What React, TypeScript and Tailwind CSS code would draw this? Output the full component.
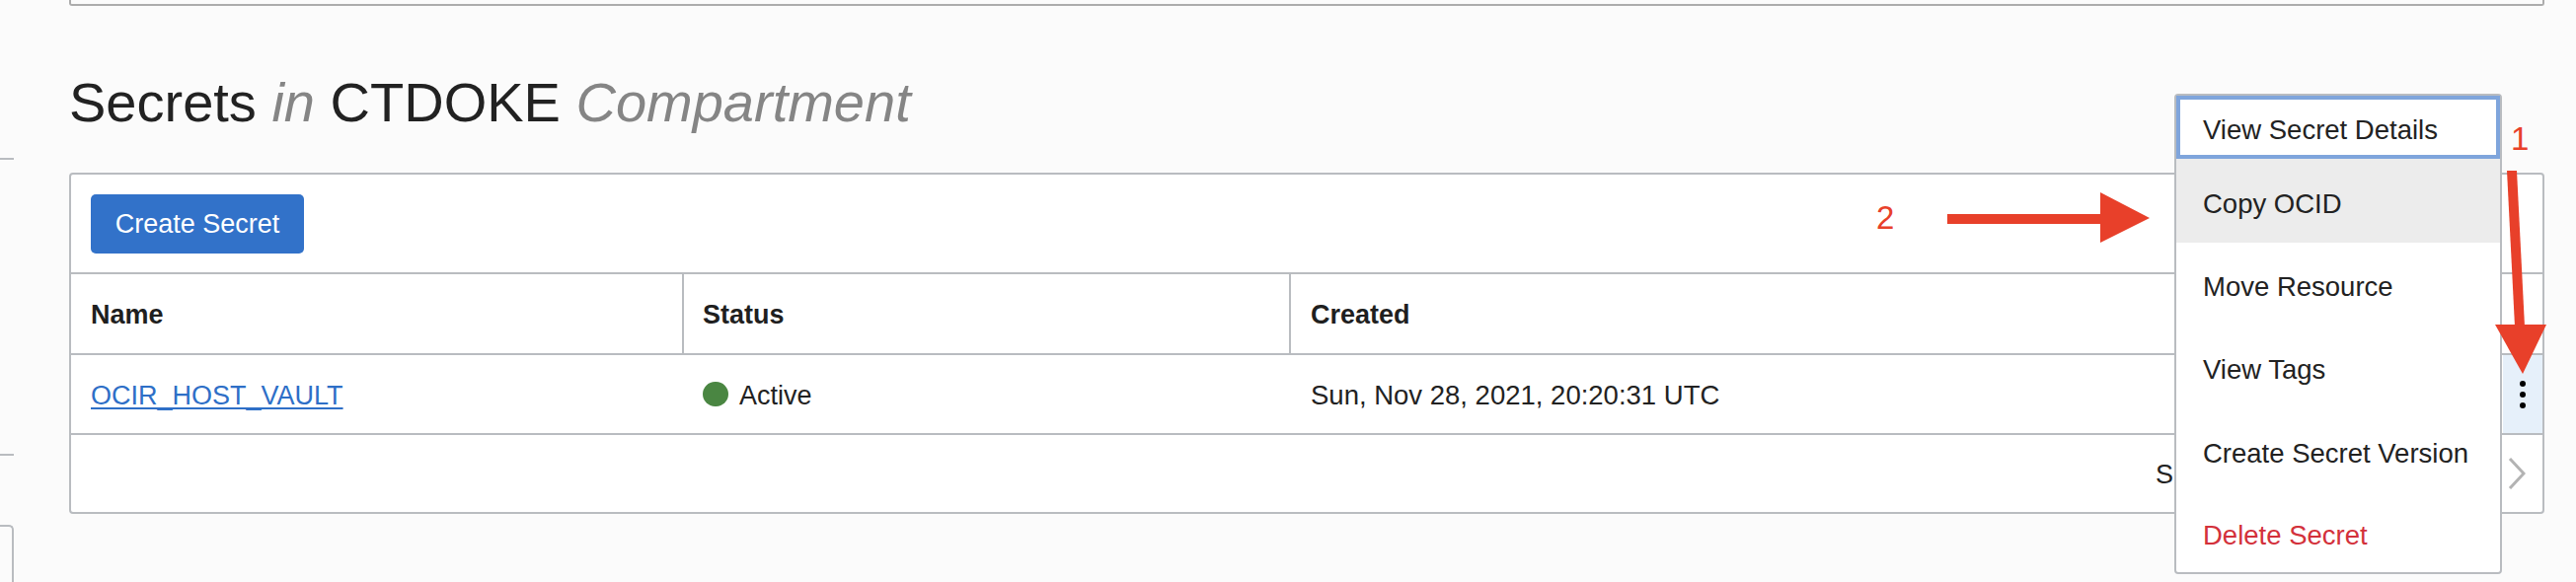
import React from "react";

const MENU_ITEMS = [
  { label: "Copy OCID", h: "h-[85px]" },
  { label: "Move Resource", h: "h-[84px]" },
  { label: "View Tags", h: "h-[84px]" },
  { label: "Create Secret Version", h: "h-[85px]" },
];

function Arrows() {
  return (
    <svg
      className="pointer-events-none absolute left-0 top-0"
      width={2610}
      height={590}
      viewBox="0 0 2610 590"
    >
      {/* arrow 2 */}
      <rect x={1973} y={217} width={157} height={10} fill="#e8402a" />
      <polygon points="2128,195 2128,246 2178,221" fill="#e8402a" />
      {/* arrow 1 */}
      <polygon points="2540,173 2550,173 2558,331 2548,331" fill="#e8402a" />
      <polygon points="2528,329 2580,329 2556,379" fill="#e8402a" />
    </svg>
  );
}

function ActionsMenu() {
  return (
    <div className="absolute left-[2203px] top-[95px] w-[332px] rounded-[4px] border-2 border-[#b9bcc0] bg-white text-[27.5px] text-[#222]">
      <div className="flex h-[64px] items-center border-4 border-[#7fa5dc] pl-[23px] pt-[6px]">
        View Secret Details
      </div>
      {MENU_ITEMS.map((item, index) => (
        <div
          key={index}
          className={`flex ${item.h} items-center pl-[27px] pt-[6px] ${index === 0 ? "bg-[#ececec]" : ""}`}
        >
          {item.label}
        </div>
      ))}
      <div className="flex h-[81px] items-center pl-[27px] pt-[6px] text-[#d3313b]">Delete Secret</div>
    </div>
  );
}

export default function App() {
  return (
    <div
      className="relative flex h-[590px] w-[2610px] overflow-hidden bg-[#fbfbfb] text-[#222]"
      style={{ fontFamily: '"Liberation Sans", Arial, sans-serif' }}
    >
      {/* cut-off side nav */}
      <div className="flex w-[14px] flex-col">
        <div className="mt-[160px] h-[2px] bg-[#b9bcc0]" />
        <div className="mt-[298px] h-[2px] bg-[#b9bcc0]" />
        <div className="mt-[70px] flex-1 rounded-tr-[5px] border-r-2 border-t-2 border-[#b9bcc0]" />
      </div>

      <main className="ml-[56px] flex w-[2508px] flex-col">
        <div className="h-[6px] rounded-b-[3px] border-x-2 border-b-2 border-[#acacac]" />

        <h1 className="mt-[66px] text-[56px] leading-[64px] font-normal">
          Secrets <i className="text-[#858585]">in</i> CTDOKE{" "}
          <i className="text-[#858585]">Compartment</i>
        </h1>

        <section className="mt-[39px] rounded-[4px] border-2 border-[#b9bcc0] bg-white text-[27px]">
          <div className="flex h-[101px] items-center border-b-2 border-[#b9bcc0] pl-[20px]">
            <button className="h-[60px] w-[216px] rounded-[5px] bg-[#3272c9] pt-[2px] text-[27px] text-white">
              Create Secret
            </button>
          </div>

          <div className="flex h-[82px] border-b-2 border-[#b9bcc0] font-bold text-[#1f1f1f]">
            <div className="flex w-[621px] items-center border-r-2 border-[#b9bcc0] pl-[20px] pt-[3px]">Name</div>
            <div className="flex w-[615px] items-center border-r-2 border-[#b9bcc0] pl-[19px] pt-[3px]">Status</div>
            <div className="flex flex-1 items-center pl-[20px] pt-[3px]">Created</div>
            <div className="w-[40px]" />
          </div>

          <div className="flex h-[81px] border-b-2 border-[#b9bcc0]">
            <div className="flex w-[621px] items-center pl-[20px] pt-[3px]">
              <a href="#" className="text-[#2e6fc7] underline underline-offset-[3px]">
                OCIR_HOST_VAULT
              </a>
            </div>
            <div className="flex w-[615px] items-center gap-[11px] pl-[19px]">
              <span className="h-[25px] w-[26px] rounded-full bg-[#4a8642]" />
              <span className="pt-[3px]">Active</span>
            </div>
            <div className="flex flex-1 items-center pl-[20px] pt-[3px] text-[27.5px]">
              Sun, Nov 28, 2021, 20:20:31 UTC
            </div>
            <div className="flex w-[40px] flex-col items-center justify-center gap-[5px] bg-[#e6f0fa]">
              <span className="h-[6px] w-[6px] rounded-full bg-black" />
              <span className="h-[6px] w-[6px] rounded-full bg-black" />
              <span className="h-[6px] w-[6px] rounded-full bg-black" />
            </div>
          </div>

          <div className="flex h-[78px] items-center justify-end">
            <span className="pt-[3px]">Showing 1 Item</span>
            <div className="flex w-[166px] justify-end pr-[12px]">
              <svg width={18} height={32} viewBox="0 0 18 32">
                <polyline points="16,1 2,16 16,31" fill="none" stroke="#b3b3b3" strokeWidth={3} />
              </svg>
            </div>
            <div className="flex w-[40px] pl-[5px]">
              <svg width={18} height={32} viewBox="0 0 18 32">
                <polyline points="2,1 16,16 2,31" fill="none" stroke="#b3b3b3" strokeWidth={3} />
              </svg>
            </div>
          </div>
        </section>
      </main>

      <ActionsMenu />

      <span className="absolute left-[1901px] top-[204px] text-[33px] leading-none text-[#e8402a]">2</span>
      <span className="absolute left-[2544px] top-[124px] text-[33px] leading-none text-[#e8402a]">1</span>
      <Arrows />
    </div>
  );
}
